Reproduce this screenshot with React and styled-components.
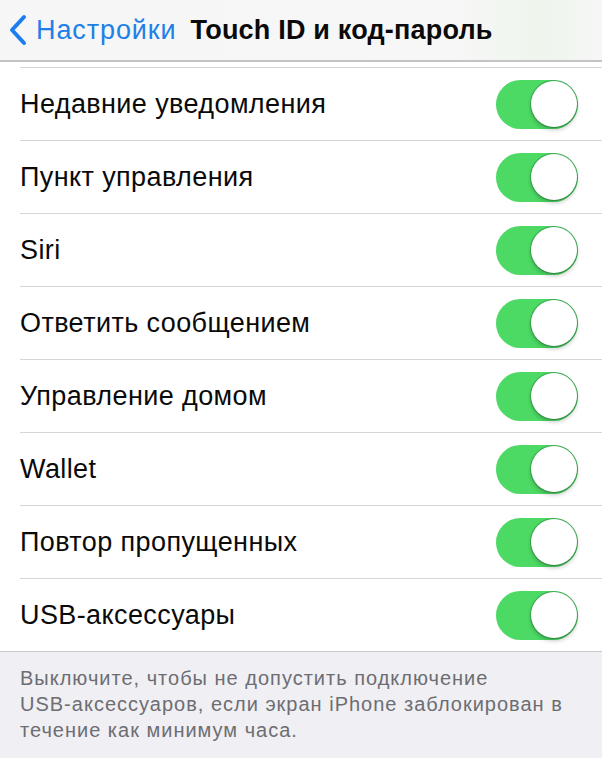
import React from "react";
import styled, { createGlobalStyle } from "styled-components";

const GlobalStyle = createGlobalStyle`
  html, body {
    margin: 0;
    padding: 0;
    background: #efeff4;
  }
  body {
    font-family: "Liberation Sans", Arial, sans-serif;
  }
`;

const items = [
  "Недавние уведомления",
  "Пункт управления",
  "Siri",
  "Ответить сообщением",
  "Управление домом",
  "Wallet",
  "Повтор пропущенных",
  "USB-аксессуары",
];

const Toggle = () => (
  <Track>
    <Knob />
  </Track>
);

const App = () => (
  <>
    <GlobalStyle />
    <Screen>
      <NavBar>
        <BackButton>
          <svg width="18" height="32" viewBox="0 0 18 32">
            <path
              d="M15 3 L3 16 L15 29"
              fill="none"
              stroke="#1a7ef0"
              strokeWidth="4"
              strokeLinecap="round"
              strokeLinejoin="round"
            />
          </svg>
          <BackLabel>Настройки</BackLabel>
        </BackButton>
        <Title>Touch ID и код-пароль</Title>
      </NavBar>
      <List>
        {items.map(label => (
          <Row key={label}>
            <Label>{label}</Label>
            <Toggle />
          </Row>
        ))}
      </List>
      <Footer>
        <FooterText>
          Выключите, чтобы не допустить подключение USB&#8209;аксессуаров, если
          экран iPhone заблокирован в течение как минимум часа.
        </FooterText>
      </Footer>
    </Screen>
  </>
);

const Screen = styled.div`
  width: 602px;
  height: 758px;
  overflow: hidden;
  display: flex;
  flex-direction: column;
  background: #efeff4;
`;

const NavBar = styled.div`
  height: 60px;
  flex-shrink: 0;
  display: flex;
  align-items: center;
  padding-left: 9px;
  background: linear-gradient(90deg, #f6f6f6 0%, #f7f7f7 75%, #eef5ec 90%, #f6f6f6 100%);
  border-bottom: 2px solid #c4c4c4;
`;

const BackButton = styled.div`
  display: flex;
  align-items: center;
  gap: 9px;
`;

const BackLabel = styled.span`
  color: #2180e8;
  font-size: 27px;
  letter-spacing: 0.9px;
`;

const Title = styled.span`
  margin-left: 14px;
  font-size: 27px;
  font-weight: bold;
  letter-spacing: 0.2px;
  color: #0a0a0a;
`;

const List = styled.div`
  background: #fff;
  padding-top: 5px;
  border-bottom: 1px solid #c8c7cc;
`;

const Row = styled.div`
  height: 72px;
  margin-left: 20px;
  padding-right: 24px;
  display: flex;
  align-items: center;
  justify-content: space-between;
  border-top: 1px solid #d6d6da;
`;

const Label = styled.span`
  font-size: 27px;
  letter-spacing: 0.4px;
  color: #0a0a0a;
`;

const Track = styled.div`
  position: relative;
  width: 82px;
  height: 49px;
  border-radius: 25px;
  background: #4cd964;
`;

const Knob = styled.div`
  position: absolute;
  right: 1px;
  top: 1px;
  width: 46px;
  height: 46px;
  border-radius: 50%;
  background: #fff;
  box-shadow: 0 3px 4px rgba(0, 0, 0, 0.22), 0 0 0 1px rgba(40, 120, 60, 0.45);
`;

const Footer = styled.div`
  padding: 13px 20px 0 20px;
`;

const FooterText = styled.p`
  margin: 0;
  max-width: 550px;
  font-size: 20px;
  line-height: 26px;
  letter-spacing: 1px;
  color: #6d6d72;
`;

export default App;
